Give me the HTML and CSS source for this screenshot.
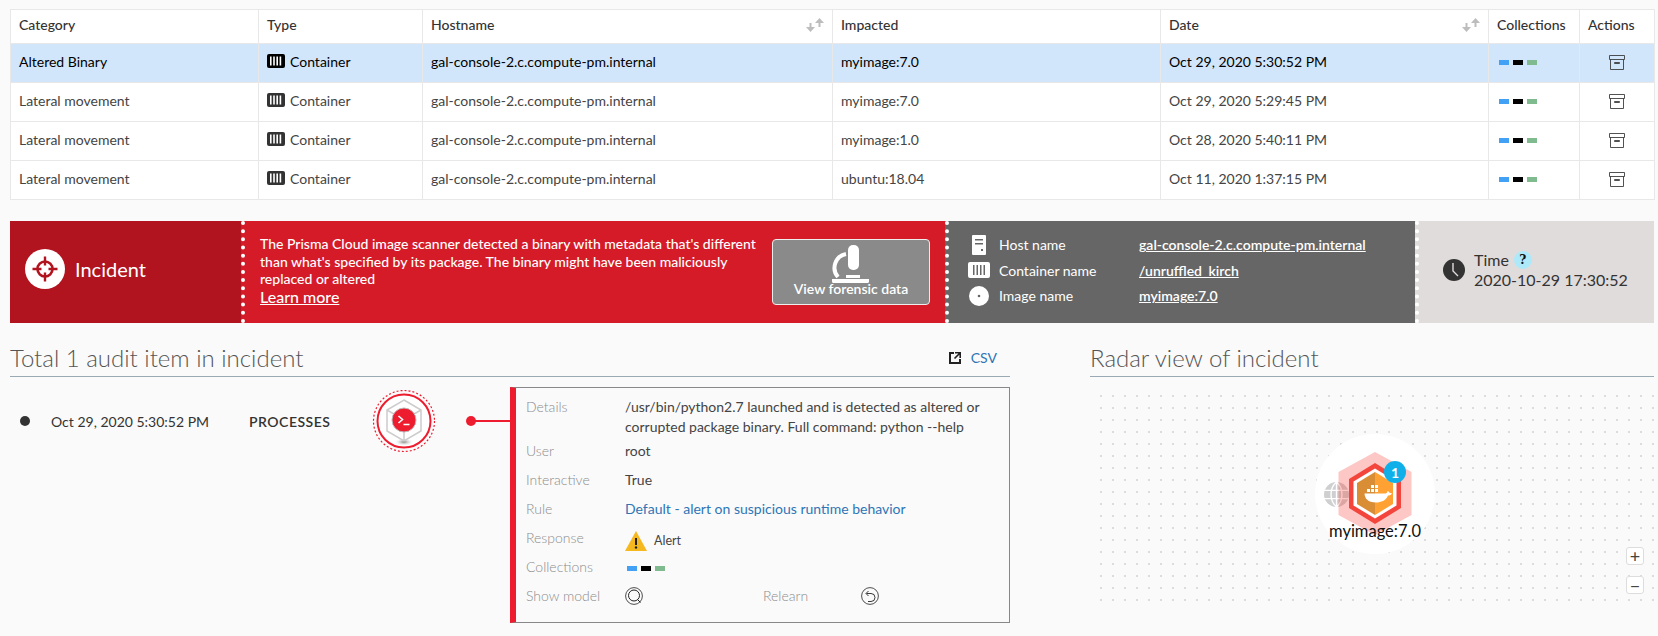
FILE: index.html
```html
<!DOCTYPE html>
<html lang="en">
<head>
<meta charset="utf-8">
<title>Incident</title>
<link rel="stylesheet" href="styles.css">
</head>
<body>
<svg class="defs" width="0" height="0" aria-hidden="true">
  <symbol id="container" viewBox="0 0 18 14"><path fill="currentColor" d="M2 0h14a2 2 0 0 1 2 2v10a2 2 0 0 1-2 2H2a2 2 0 0 1-2-2V2a2 2 0 0 1 2-2z"/><path fill="#fff" d="M3 2.500h1.600v9H3zM6.200 2.500h1.600v9H6.200zM9.400 2.500H11v9H9.400zM12.600 2.500h1.600v9h-1.600z"/></symbol>
  <symbol id="archive" viewBox="0 0 16 15"><path fill="none" stroke="#333" stroke-width=".85" d="M.5.500h15v4h-15zM1.500 4.500v10h13v-10M5.500 7.500h5v1h-5z"/></symbol>
  <symbol id="sortarrows" viewBox="0 0 18 14"><path fill="#bdbdbd" d="M3.500 5h2v4H9l-4.500 5L0 9h3.500zM13.500 0 18 5h-3.500v4h-2V5H9z"/></symbol>
</svg>

<main class="page">
  <table class="grid">
    <colgroup>
      <col class="c1"><col class="c2"><col class="c3"><col class="c4"><col class="c5"><col class="c6"><col class="c7">
    </colgroup>
    <thead>
      <tr>
        <th>Category</th><th>Type</th>
        <th><span class="sorthead">Hostname<svg class="sort"><use href="#sortarrows"/></svg></span></th>
        <th>Impacted</th>
        <th><span class="sorthead">Date<svg class="sort"><use href="#sortarrows"/></svg></span></th>
        <th>Collections</th><th>Actions</th>
      </tr>
    </thead>
    <tbody>
      <tr class="selected">
        <td>Altered Binary</td>
        <td><span class="type"><svg class="ctr"><use href="#container"/></svg>Container</span></td>
        <td>gal-console-2.c.compute-pm.internal</td><td>myimage:7.0</td><td>Oct 29, 2020 5:30:52 PM</td>
        <td><span class="swatches"><i class="s-blue"></i><i class="s-black"></i><i class="s-green"></i></span></td>
        <td class="act"><svg class="archive"><use href="#archive"/></svg></td>
      </tr>
      <tr>
        <td>Lateral movement</td>
        <td><span class="type"><svg class="ctr"><use href="#container"/></svg>Container</span></td>
        <td>gal-console-2.c.compute-pm.internal</td><td>myimage:7.0</td><td>Oct 29, 2020 5:29:45 PM</td>
        <td><span class="swatches"><i class="s-blue"></i><i class="s-black"></i><i class="s-green"></i></span></td>
        <td class="act"><svg class="archive"><use href="#archive"/></svg></td>
      </tr>
      <tr>
        <td>Lateral movement</td>
        <td><span class="type"><svg class="ctr"><use href="#container"/></svg>Container</span></td>
        <td>gal-console-2.c.compute-pm.internal</td><td>myimage:1.0</td><td>Oct 28, 2020 5:40:11 PM</td>
        <td><span class="swatches"><i class="s-blue"></i><i class="s-black"></i><i class="s-green"></i></span></td>
        <td class="act"><svg class="archive"><use href="#archive"/></svg></td>
      </tr>
      <tr>
        <td>Lateral movement</td>
        <td><span class="type"><svg class="ctr"><use href="#container"/></svg>Container</span></td>
        <td>gal-console-2.c.compute-pm.internal</td><td>ubuntu:18.04</td><td>Oct 11, 2020 1:37:15 PM</td>
        <td><span class="swatches"><i class="s-blue"></i><i class="s-black"></i><i class="s-green"></i></span></td>
        <td class="act"><svg class="archive"><use href="#archive"/></svg></td>
      </tr>
    </tbody>
  </table>

  <section class="banner">
    <div class="b-title">
      <svg class="target" viewBox="0 0 40 40">
        <circle cx="20" cy="20" r="20" fill="#fff"/>
        <circle cx="20" cy="20" r="7.5" fill="none" stroke="#b2141f" stroke-width="2.6"/>
        <path stroke="#b2141f" stroke-width="2.4" d="M20 7.500v9M20 23.500v9M7.500 20h9M23.500 20h9"/>
      </svg>
      <span>Incident</span>
    </div>
    <div class="b-desc">
      <div class="desc-text">
        <p>The Prisma Cloud image scanner detected a binary with metadata that's different than what's specified by its package. The binary might have been maliciously replaced or altered</p>
        <a class="learn">Learn more</a>
      </div>
      <button class="forensic" type="button">
        <svg class="scope" viewBox="0 0 38 38">
          <rect x="16" y="0" width="11" height="25" rx="5" fill="#fff"/>
          <path fill="none" stroke="#fff" stroke-width="4" d="M14 9A14 14 0 0 0 6 32"/>
          <path fill="#fff" d="M14 30h14v3H14zM0 34h37v2.500a1.500 1.500 0 0 1-1.500 1.500h-34A1.500 1.500 0 0 1 0 36.500z"/>
        </svg>
        <span>View forensic data</span>
      </button>
    </div>
    <div class="b-host">
      <div class="host-row">
        <svg class="host-ic" viewBox="0 0 20 20"><path fill="#fff" fill-rule="evenodd" d="M4 0h12a1 1 0 0 1 1 1v18a1 1 0 0 1-1 1H4a1 1 0 0 1-1-1V1a1 1 0 0 1 1-1zM6 4v1.500h8V4zM6 8v1.500h8V8zM12 14v2h2v-2z"/></svg>
        <span class="h-label">Host name</span><a class="h-val">gal-console-2.c.compute-pm.internal</a>
      </div>
      <div class="host-row">
        <svg class="host-ic host-ctr" viewBox="0 0 22 16"><path fill="#fff" d="M2 0h18a2 2 0 0 1 2 2v12a2 2 0 0 1-2 2H2a2 2 0 0 1-2-2V2a2 2 0 0 1 2-2z"/><path fill="#666" d="M5 3h1.500v10H5zM8.500 3H10v10H8.500zM12 3h1.500v10H12zM15.500 3H17v10h-1.500z"/></svg>
        <span class="h-label">Container name</span><a class="h-val">/unruffled_kirch</a>
      </div>
      <div class="host-row">
        <svg class="host-ic" viewBox="0 0 20 20"><circle cx="10" cy="10" r="10" fill="#fff"/><circle cx="10" cy="10" r="1.3" fill="#666"/></svg>
        <span class="h-label">Image name</span><a class="h-val">myimage:7.0</a>
      </div>
    </div>
    <div class="b-time">
      <svg class="clock" viewBox="0 0 22 22"><circle cx="11" cy="11" r="11" fill="#333"/><path fill="none" stroke="#e0dcdb" stroke-width="1.4" d="M10 4v8l5 5"/></svg>
      <div class="time-text">
        <div class="time-top">Time <span class="q">?</span></div>
        <div>2020-10-29 17:30:52</div>
      </div>
    </div>
  </section>

  <section class="lower">
    <div class="audit">
      <header class="heading">
        <h2>Total 1 audit item in incident</h2>
        <a class="csv">
          <svg class="ext" viewBox="0 0 12 12"><path fill="none" stroke="#222" stroke-width="2" d="M5 1H1v10h10V7"/><path fill="none" stroke="#222" stroke-width="1.6" d="M6 .8h5.200V6M11 1 5.500 6.500"/></svg>
          CSV
        </a>
      </header>
      <div class="event">
        <div class="event-line">
          <i class="bullet"></i>
          <span class="ev-date">Oct 29, 2020 5:30:52 PM</span>
          <span class="ev-kind">PROCESSES</span>
          <svg class="proc" viewBox="0 0 64 64">
            <defs><radialGradient id="shadow"><stop offset="0" stop-color="#888"/><stop offset="1" stop-color="#fff" stop-opacity="0"/></radialGradient></defs>
            <circle cx="32" cy="32" r="30.5" fill="none" stroke="#ed1c2e" stroke-width="1.2" stroke-dasharray="2 2"/>
            <circle cx="32" cy="32" r="26.5" fill="#fff" stroke="#ed1c2e" stroke-width="2"/>
            <ellipse cx="32" cy="53" rx="10" ry="4" fill="url(#shadow)"/>
            <path fill="none" stroke="#ccc" stroke-width="1.5" d="M32 11 49 21v21L32 52 15 42V21zM15 21 32 31 49 21M32 31v21"/>
            <circle cx="32" cy="31" r="12" fill="#ed1c2e" stroke="#bbb" stroke-width="1"/>
            <path fill="none" stroke="#fff" stroke-width="1.6" d="M26.500 27l4 3.500-4 3.500M31.500 35.500h6"/>
          </svg>
          <span class="connector"><i></i></span>
        </div>
        <div class="card">
          <div class="row row-first"><span class="k">Details</span><span class="v">/usr/bin/python2.7 launched and is detected as altered or corrupted package binary. Full command: python --help</span></div>
          <div class="row"><span class="k">User</span><span class="v">root</span></div>
          <div class="row"><span class="k">Interactive</span><span class="v">True</span></div>
          <div class="row"><span class="k">Rule</span><a class="v rule">Default - alert on suspicious runtime behavior</a></div>
          <div class="row"><span class="k">Response</span><span class="v alert">
            <svg class="warn" viewBox="0 0 22 20"><path fill="#f6b81f" d="M11 0 22 20H0z"/><path stroke="#222" stroke-width="2" d="M11 7v7"/><circle cx="11" cy="16.5" r="1.2" fill="#222"/></svg>
            <span>Alert</span></span></div>
          <div class="row"><span class="k">Collections</span><span class="v"><span class="swatches"><i class="s-blue"></i><i class="s-black"></i><i class="s-green"></i></span></span></div>
          <div class="row">
            <span class="k">Show model</span>
            <span class="v model">
              <svg class="round-ic" viewBox="0 0 18 18"><circle cx="9" cy="9" r="8.4" fill="none" stroke="#222" stroke-width=".8"/><circle cx="9" cy="8.500" r="5.5" fill="none" stroke="#222" stroke-width="1"/><path stroke="#222" stroke-width="1" d="M12.500 12.500l3 3"/></svg>
              <span class="k relearn">Relearn</span>
              <svg class="round-ic" viewBox="0 0 18 18"><circle cx="9" cy="9" r="8.4" fill="none" stroke="#222" stroke-width=".8"/><path fill="none" stroke="#222" stroke-width=".9" d="M5.500 6.500H10a4 4 0 0 1 0 8H7M7.500 4 5 6.500 7.500 9"/></svg>
            </span>
          </div>
        </div>
      </div>
    </div>

    <div class="radar">
      <header class="heading"><h2>Radar view of incident</h2></header>
      <div class="canvas">
        <div class="halo"></div>
        <svg class="globe" viewBox="0 0 24 24"><circle cx="12" cy="12" r="12" fill="#cfcfcf"/><path fill="none" stroke="#fff" stroke-width="1.3" d="M0 8h24M0 16h24M12 0v24M12 0c-7 6-7 18 0 24M12 0c7 6 7 18 0 24"/></svg>
        <svg class="node" viewBox="0 0 80 90">
          <path fill="#f4453c" fill-opacity=".3" d="M40 3 76.500 23v43L40 86 3.500 66V23z"/>
          <path fill="#f4453c" d="M40 14 66 30v29L40 75 14 59V30z"/>
          <path fill="#fff" d="M40 19.500 61.500 32.500v24L40 69.500 18.500 56.500v-24z"/>
          <path fill="#d98e35" d="M40 23v43L22 55V34z"/>
          <path fill="#ffa233" d="M40 23v43l18-11V34z"/>
          <path fill="#fff" d="M36 36h3v3h-3zM40 36h3v3h-3zM36 40h3v3h-3zM40 40h3v3h-3zM32 40h3v3h-3zM29.500 44.500h21c1 0 2-1 2-2.500 1 .2 1.800 1 2 1.800 1 0 1.800.2 2.500.7-1 1.500-2.500 2-4 2-2 5-7 7-12 7-8 0-11.500-4-11.500-9.500z"/>
        </svg>
        <span class="badge">1</span>
        <span class="node-label">myimage:7.0</span>
        <div class="zoom-ctl"><span class="zbtn">+</span><span class="zbtn">−</span></div>
      </div>
    </div>
  </section>
</main>
</body>
</html>
```

FILE: styles.css
```css
* { box-sizing: border-box; }
html, body { margin: 0; padding: 0; }
body { background: #fafafa; color: #333; font-family: Lato, "Open Sans", sans-serif; font-size: 14px; width: 1658px; height: 636px; overflow: hidden; }
.defs { position: absolute; }
.page { padding: 9px 4px 0 10px; }

.grid { width: 1644px; table-layout: fixed; border-collapse: collapse; background: #fff; }
.grid .c1 { width: 248px; }
.grid .c2 { width: 164px; }
.grid .c3 { width: 410px; }
.grid .c4 { width: 328px; }
.grid .c5 { width: 328px; }
.grid .c6 { width: 91px; }
.grid .c7 { width: 75px; }
.grid th, .grid td { border: 1px solid #e8e8e8; padding: 0 8px 4px; text-align: left; font-size: 14px; white-space: nowrap; }
.grid th { height: 34px; font-weight: 500; color: #333; }
.grid td { height: 39px; color: #444; }
.selected td { background: #d2e6fb; color: #000; }
.sorthead { display: flex; justify-content: space-between; align-items: center; }
.sort { width: 18px; height: 14px; }
.type { display: flex; align-items: center; gap: 5px; }
.ctr { width: 18px; height: 14px; color: #333; }
.selected .ctr { color: #000; }
.swatches { display: inline-flex; gap: 4px; vertical-align: middle; margin-left: 2px; }
.swatches i { display: block; width: 10px; height: 5px; }
.s-blue { background: #42a0f5; }
.s-black { background: #000; }
.s-green { background: #7fbb8f; }
.grid .act { text-align: center; padding-bottom: 1px; }
.archive { width: 16px; height: 15px; display: block; margin: 0 auto; }

.banner { display: flex; height: 102px; margin-top: 21px; color: #fff; }
.b-title { width: 231px; background: #b2141f; display: flex; align-items: center; gap: 10px; padding: 0 0 7px 15px; font-size: 20px; }
.target { width: 40px; height: 40px; flex: none; }
.b-desc { width: 704px; background: #d51b28; border-left: 4px dotted #fff; display: flex; align-items: flex-start; padding: 14px 0 0 15px; font-weight: 500; font-size: 14px; }
.desc-text { width: 512px; padding-right: 6px; line-height: 18px; }
.desc-text p { margin: 0; line-height: 17.7px; }
.learn { font-size: 16px; text-decoration: underline; line-height: 18px; display: block; font-weight: 500; }
.forensic { width: 158px; height: 66px; margin: 4px 0 0 0; background: #8a8a8a; color: #fff; border: 1px solid #eee; border-radius: 4px; font: 600 14px Lato, sans-serif; display: flex; flex-direction: column; align-items: center; padding: 5px 0 0; }
.scope { width: 38px; height: 38px; margin-bottom: -3px; flex: none; }
.b-host { width: 470px; background: #666; border-left: 4px dotted #fff; padding: 11px 0 0 20px; font-size: 14px; }
.host-row { display: flex; align-items: center; height: 25.5px; }
.host-ic { width: 20px; height: 20px; flex: none; }
.host-ctr { width: 22px; height: 16px; margin-left: -1px; margin-right: -1px; }
.h-label { width: 140px; margin-left: 10px; flex: none; }
.h-val { text-decoration: underline; font-weight: 600; }
.b-time { flex: 1; background: #e0dcdb; border-left: 4px dotted #fff; color: #333; display: flex; align-items: center; padding: 0 0 5px 24px; gap: 9px; font-size: 16px; line-height: 20px; }
.clock { width: 22px; height: 22px; }
.time-top { display: flex; align-items: center; gap: 5px; }
.q { width: 18px; height: 18px; border-radius: 50%; background: #aee9f9; color: #111; font: 700 12px "DejaVu Serif", serif; display: flex; align-items: center; justify-content: center; }

.lower { display: flex; gap: 80px; margin-top: 16px; }
.audit { width: 1000px; flex: none; }
.radar { width: 564px; flex: none; }
.heading { height: 38px; border-bottom: 1px solid #9aaab5; display: flex; justify-content: space-between; align-items: center; }
.heading h2 { margin: 0; font-size: 24px; font-weight: 300; color: #555; }
.csv { display: flex; align-items: center; gap: 10px; color: #2e75b6; font-size: 14px; margin-right: 13px; }
.ext { width: 12px; height: 12px; }

.event { display: flex; align-items: flex-start; margin-top: 10px; }
.event-line { width: 500px; display: flex; align-items: center; height: 68px; }
.bullet { width: 10px; height: 10px; border-radius: 50%; background: #333; margin-left: 10px; flex: none; }
.ev-date { margin-left: 21px; width: 198px; flex: none; font-size: 14px; }
.ev-kind { width: 123px; font-weight: 600; letter-spacing: .5px; flex: none; }
.proc { width: 64px; height: 64px; flex: none; }
.connector { flex: 1; margin-left: 35px; height: 2px; background: #ed1c2e; position: relative; }
.connector i { position: absolute; left: -5px; top: -4px; width: 10px; height: 10px; border-radius: 50%; background: #ed1c2e; }
.card { width: 500px; height: 236px; border: 1px solid #888; border-left: 6px solid #ed1c2e; padding: 6px 0 0 10px; font-size: 14px; }
.row { display: flex; min-height: 29px; align-items: center; }
.row-first { align-items: flex-start; line-height: 20px; min-height: 43px; padding-top: 3px; margin-bottom: -1px; }
.k { width: 99px; flex: none; color: #8c8c8c; font-weight: 300; }
.v { color: #444; width: 370px; }
.rule { color: #2e75b6; }
.alert { display: flex; align-items: center; gap: 7px; font-size: 12.5px; margin-top: 6px; }
.warn { width: 22px; height: 20px; }
.model { display: flex; align-items: center; }
.round-ic { width: 18px; height: 18px; flex: none; }
.relearn { margin-left: 120px; width: 98px; }

.canvas { position: relative; height: 217px; margin-top: 8px; background-image: radial-gradient(circle at 1px 1px, #dcdcdc 1px, transparent 1.2px); background-size: 12px 12px; background-position: 10px 10px; background-clip: content-box; padding: 10px 0 0 10px; }
.halo { position: absolute; left: 225px; top: 49px; width: 120px; height: 120px; border-radius: 50%; background: #fff; }
.globe { position: absolute; left: 234px; top: 97px; width: 25px; height: 25px; }
.node { position: absolute; left: 245px; top: 64px; width: 80px; height: 90px; }
.badge { position: absolute; left: 294px; top: 76px; width: 22px; height: 22px; border-radius: 50%; background: #0fb0ea; color: #fff; font-weight: 700; font-size: 14px; display: flex; align-items: center; justify-content: center; }
.node-label { position: absolute; left: 236px; top: 136px; width: 98px; text-align: center; font-size: 16.5px; color: #111; white-space: nowrap; }
.zoom-ctl { position: absolute; right: 10px; top: 162px; display: flex; flex-direction: column; gap: 11px; }
.zbtn { width: 18px; height: 18px; background: #fff; border: 1px solid #ddd; border-radius: 3px; display: flex; align-items: center; justify-content: center; font-size: 18px; line-height: 1; color: #444; }
```
